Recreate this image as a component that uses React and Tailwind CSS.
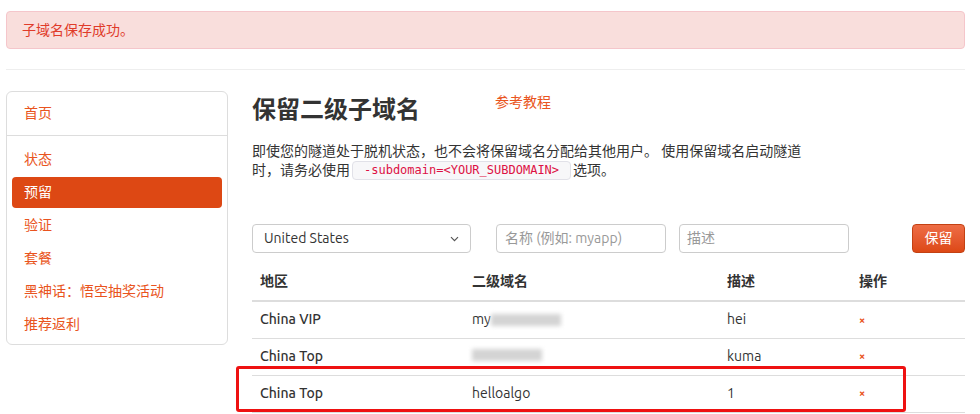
import React from "react";

const font = "font-['Ubuntu','Noto_Sans','Noto_Sans_CJK_SC',sans-serif]";

const navItems = ["状态", "预留", "验证", "套餐", "黑神话：悟空抽奖活动", "推荐返利"];

const rows = [
  { region: "China VIP", sub: "my", blur: true, desc: "hei" },
  { region: "China Top", sub: "", blur: true, desc: "kuma" },
  { region: "China Top", sub: "helloalgo", blur: false, desc: "1" },
];

const Sidebar = () => (
  <div className="w-[222px] shrink-0 self-start rounded-md border border-[#dddddd] pb-[2px]">
    <div className="h-[44px] flex items-center px-[17px] text-[14px] text-[#e95420] border-b border-[#dddddd]">
      首页
    </div>
    <nav className="flex flex-col px-[5px] pt-[8px]">
      {navItems.map((label) => (
        <div
          key={label}
          className={`h-[31px] mb-[2px] flex items-center px-[12px] text-[14px] rounded ${
            label === "预留" ? "bg-[#dd4814] text-white" : "text-[#e95420]"
          }`}
        >
          {label}
        </div>
      ))}
    </nav>
  </div>
);

const App = () => {
  return (
    <div className={`${font} bg-white w-[980px] h-[414px] overflow-hidden relative pl-[6px] pr-[15px] pt-[11px]`}>
      {/* alert */}
      <div className="h-[38px] flex items-center px-[15px] rounded border border-[#f5c6cb] bg-[#f9dedc] text-[#e03b2a] text-[14px]">
        子域名保存成功。
      </div>
      <div className="mt-[20px] border-t border-[#eeeeee]" />

      <div className="flex mt-[21px]">
        <Sidebar />

        <main className="ml-[24px] flex-1">
          <div className="flex items-start">
            <h1 className="text-[24px] font-bold text-[#333333] leading-[34px] mt-[2px]">保留二级子域名</h1>
            <a className="ml-[75px] mt-[0px] text-[14px] text-[#e95420] leading-[22px]">参考教程</a>
          </div>
          <div className="mt-[15px] text-[14px] leading-[19px] text-[#333333]">
            <div>即使您的隧道处于脱机状态，也不会将保留域名分配给其他用户。 使用保留域名启动隧道</div>
            <div className="flex items-center">
              <span>时，请务必使用</span>
              <code className="mx-[2px] px-[11px] rounded bg-[#f7f7f9] border border-[#e1e1e8] text-[#dd1144] text-[12px] leading-[17px] font-['DejaVu_Sans_Mono',monospace]">
                -subdomain=&lt;YOUR_SUBDOMAIN&gt;
              </code>
              <span>选项。</span>
            </div>
          </div>

          <div className="flex items-center mt-[44px] h-[29px]">
            <div className="w-[219px] h-[29px] rounded border border-[#cccccc] flex items-center justify-between px-[11px] text-[14px] text-[#333333]">
              <span>United States</span>
              <svg width="9" height="6" viewBox="0 0 9 6" fill="none" stroke="#555" strokeWidth="1.2">
                <path d="M1 1.2l3.5 3.5 3.5-3.5" />
              </svg>
            </div>
            <div className="ml-[25px] w-[170px] h-[29px] rounded border border-[#cccccc] flex items-center px-[8px] text-[14px] text-[#999999]">
              名称 (例如: myapp)
            </div>
            <div className="ml-[13px] w-[170px] h-[29px] rounded border border-[#cccccc] flex items-center px-[7px] text-[14px] text-[#999999]">
              描述
            </div>
            <button className="ml-auto w-[53px] h-[29px] rounded bg-gradient-to-b from-[#ee6d45] to-[#dd4814] border border-[#c34113] text-white text-[14px]">
              保留
            </button>
          </div>

          <table className="mt-[10px] w-full text-[14px] text-[#333333] border-collapse">
            <thead>
              <tr className="h-[38px] border-b-2 border-[#dddddd] font-bold">
                <th className="w-[212px] text-left px-[8px]">地区</th>
                <th className="w-[255px] text-left px-[8px]">二级域名</th>
                <th className="w-[132px] text-left px-[8px]">描述</th>
                <th className="text-left px-[8px]">操作</th>
              </tr>
            </thead>
            <tbody>
              {rows.map((r, i) => (
                <tr key={i} className="h-[37px] border-b border-[#dddddd]">
                  <td className="px-[8px] font-medium">{r.region}</td>
                  <td className="px-[8px]">
                    <span className="inline-flex items-center">
                      {r.sub}
                      {r.blur && (
                        <span className="inline-block w-[70px] h-[12px] bg-[#d4d4d4] blur-[2px]" />
                      )}
                    </span>
                  </td>
                  <td className="px-[8px]">{r.desc}</td>
                  <td className="px-[8px] text-[11px] text-[#e95420] font-bold">×</td>
                </tr>
              ))}
            </tbody>
          </table>
        </main>
      </div>

      {/* red highlight annotation */}
      <div className="absolute left-[236px] top-[366px] w-[670px] h-[46px] border-[3px] border-[#ee1111] rounded-[3px]" />
    </div>
  );
};

export default App;
